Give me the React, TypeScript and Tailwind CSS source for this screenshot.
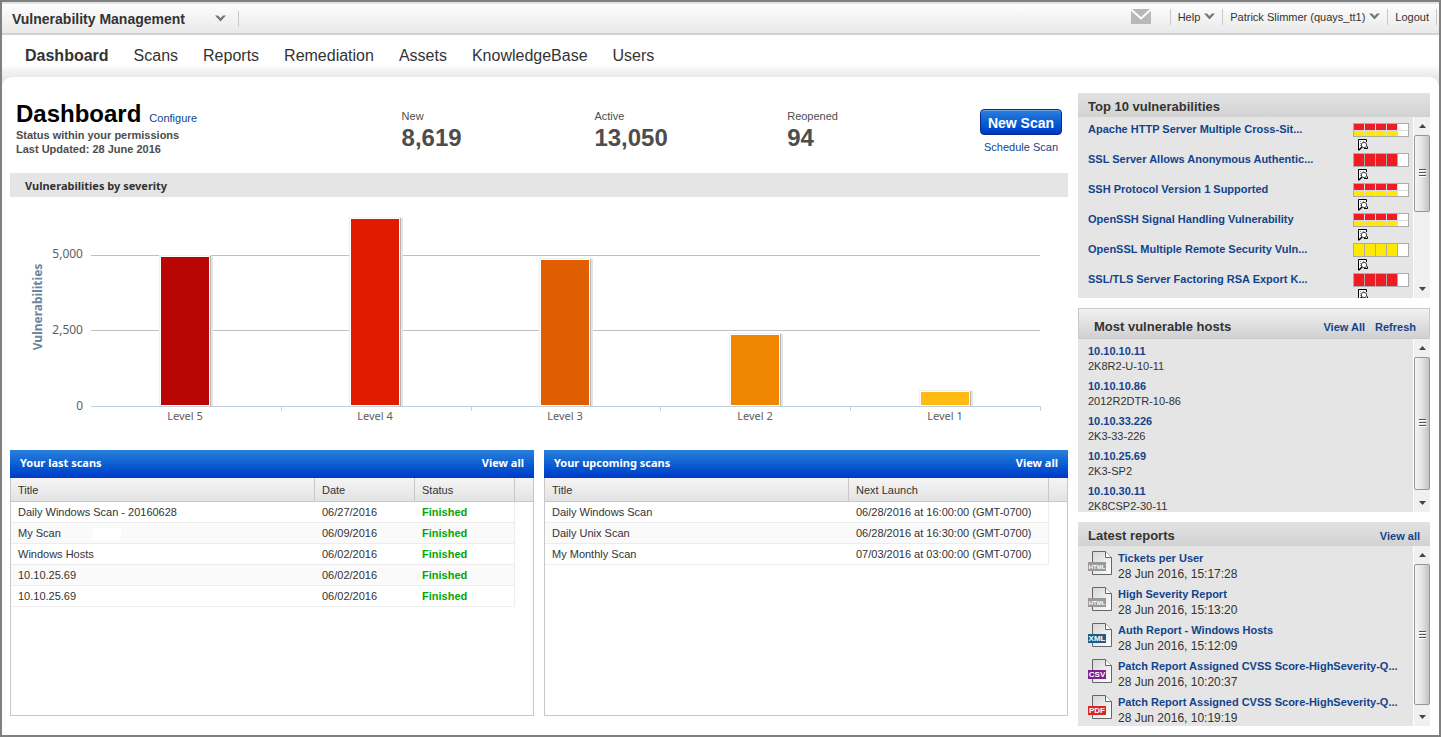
import { type ReactNode } from "react";

interface Severity {
  name: string;
  top: string;
  bottom?: string;
}

const RED = "#ee1c25";
const YELLOW = "#ffe900";

const navItems = ["Dashboard", "Scans", "Reports", "Remediation", "Assets", "KnowledgeBase", "Users"];

const stats = [
  { label: "New", value: "8,619" },
  { label: "Active", value: "13,050" },
  { label: "Reopened", value: "94" },
];

const levels = [
  { label: "Level 5", color: "#b90504", height: 148 },
  { label: "Level 4", color: "#e01b00", height: 186 },
  { label: "Level 3", color: "#e05d00", height: 145 },
  { label: "Level 2", color: "#f08500", height: 70 },
  { label: "Level 1", color: "#ffbb11", height: 13 },
];

const lastScans = [
  { title: "Daily Windows Scan - 20160628", date: "06/27/2016", status: "Finished" },
  { title: "My Scan", date: "06/09/2016", status: "Finished" },
  { title: "Windows Hosts", date: "06/02/2016", status: "Finished" },
  { title: "10.10.25.69", date: "06/02/2016", status: "Finished" },
  { title: "10.10.25.69", date: "06/02/2016", status: "Finished" },
];

const upcomingScans = [
  { title: "Daily Windows Scan", launch: "06/28/2016 at 16:00:00 (GMT-0700)" },
  { title: "Daily Unix Scan", launch: "06/28/2016 at 16:30:00 (GMT-0700)" },
  { title: "My Monthly Scan", launch: "07/03/2016 at 03:00:00 (GMT-0700)" },
];

const topVulns: Severity[] = [
  { name: "Apache HTTP Server Multiple Cross-Sit...", top: RED, bottom: YELLOW },
  { name: "SSL Server Allows Anonymous Authentic...", top: RED },
  { name: "SSH Protocol Version 1 Supported", top: RED, bottom: YELLOW },
  { name: "OpenSSH Signal Handling Vulnerability", top: RED, bottom: YELLOW },
  { name: "OpenSSL Multiple Remote Security Vuln...", top: YELLOW },
  { name: "SSL/TLS Server Factoring RSA Export K...", top: RED },
];

const hosts = [
  { ip: "10.10.10.11", name: "2K8R2-U-10-11" },
  { ip: "10.10.10.86", name: "2012R2DTR-10-86" },
  { ip: "10.10.33.226", name: "2K3-33-226" },
  { ip: "10.10.25.69", name: "2K3-SP2" },
  { ip: "10.10.30.11", name: "2K8CSP2-30-11" },
];

const reports = [
  { title: "Tickets per User", date: "28 Jun 2016, 15:17:28", type: "HTML", color: "#999999" },
  { title: "High Severity Report", date: "28 Jun 2016, 15:13:20", type: "HTML", color: "#999999" },
  { title: "Auth Report - Windows Hosts", date: "28 Jun 2016, 15:12:09", type: "XML", color: "#1f5f83" },
  { title: "Patch Report Assigned CVSS Score-HighSeverity-Q...", date: "28 Jun 2016, 10:20:37", type: "CSV", color: "#7d1f8c" },
  { title: "Patch Report Assigned CVSS Score-HighSeverity-Q...", date: "28 Jun 2016, 10:19:19", type: "PDF", color: "#dc2626" },
];

const Chevron = () => (
  <svg width="11" height="7" viewBox="0 0 11 7" aria-hidden="true">
    <path d="M0 0.5h3L5.5 3 8 0.5h3L5.5 6.5z" fill="#777" />
  </svg>
);

const Divider = () => <span className="h-4 w-px bg-[#c9c9c9]" />;

const DetailIcon = () => (
  <svg width="10" height="12" viewBox="0 0 10 12" fill="none" aria-hidden="true">
    <path d="M0.5 11.5V0.5H8.5V3" fill="#f6f6f6" stroke="#000" />
    <path d="M1 1h7v7L4 9l-3 2z" fill="#f6f6f6" />
    <path d="M2 2.5h1M5 2.5h1M2 4.5h1M2 6.5h1" stroke="#999" />
    <circle cx="6" cy="6" r="2.7" fill="#fff" stroke="#444" />
    <path d="M4 8L1 11" stroke="#000" strokeWidth="1.5" />
    <path d="M6 9.5h3.5V7.5" stroke="#000" />
  </svg>
);

const FileIcon = ({ type, color }: { type: string; color: string }) => (
  <svg className="shrink-0" width="24" height="24" viewBox="0 0 24 24" aria-hidden="true">
    <defs>
      <linearGradient id="page" x1="0" y1="0" x2="1" y2="1">
        <stop offset="0" stopColor="#d6d6d6" />
        <stop offset="1" stopColor="#fff" />
      </linearGradient>
    </defs>
    <path d="M4.5 0.5h13l6 6v17h-19z" fill="url(#page)" stroke="#666" />
    <path d="M17.5 0.5v6h6" fill="#fff" stroke="#666" />
    <rect x="0" y="11" width="18" height="9" fill={color} />
    <text
      x="9"
      y="18"
      textAnchor="middle"
      fill="#fff"
      fontSize={type === "HTML" ? 6 : 8}
      fontWeight="bold"
      fontFamily="Liberation Sans, Arial, sans-serif"
    >
      {type}
    </text>
  </svg>
);

const SeverityMeter = ({ top, bottom }: { top: string; bottom?: string }) => (
  <svg width="56" height="14" viewBox="0 0 56 14" shapeRendering="crispEdges" aria-hidden="true">
    <rect width="56" height="14" fill="#acacac" />
    {[0, 1, 2, 3, 4].map((i) => (
      <g key={i}>
        <rect x={1 + i * 11} y="1" width="10" height="12" fill={i === 4 ? "#fff" : top} />
        {bottom && (
          <>
            <rect x={i * 11 + (i ? 0 : 1)} y="7" width="11" height="1" fill="#dcdcdc" />
            <rect x={1 + i * 11} y="8" width="10" height="5" fill={i === 4 ? "#fff" : bottom} />
          </>
        )}
      </g>
    ))}
    {bottom && <path d="M11.5 1v12M22.5 1v12M33.5 1v12M44.5 1v12" stroke="#dcdcdc" />}
  </svg>
);

// thumb is the share of the track taken by the handle, out of 100
const ScrollBar = ({ thumb }: { thumb: number }) => (
  <div className="flex w-[17px] shrink-0 flex-col border-l border-white bg-[#f0f0f0]">
    <button aria-label="Scroll up" className="flex h-[18px] shrink-0 items-center justify-center">
      <svg width="7" height="4" viewBox="0 0 7 4">
        <path d="M0 4L3.5 0 7 4z" fill="#444" />
      </svg>
    </button>
    <div className="min-h-0 flex-1">
      <div
        className="flex flex-col items-center justify-center gap-px rounded-[2px] border border-[#979797] bg-linear-to-r from-[#f5f5f5] via-[#e4e4e4] to-[#c2c2c6]"
        style={{ height: `${thumb}%` }}
      >
        {[0, 1, 2].map((i) => (
          <span key={i} className="h-[2px] w-[7px] border-t border-[#555] bg-white" />
        ))}
      </div>
    </div>
    <button aria-label="Scroll down" className="flex h-[18px] shrink-0 items-center justify-center">
      <svg width="7" height="4" viewBox="0 0 7 4">
        <path d="M0 0L3.5 4 7 0z" fill="#444" />
      </svg>
    </button>
  </div>
);

const SideBody = ({ height, thumb, children }: { height: string; thumb: number; children: ReactNode }) => (
  <div className={`flex overflow-hidden bg-[#e5e5e5] ${height}`}>
    <div className="min-w-0 flex-1 overflow-hidden pl-[10px]">{children}</div>
    <ScrollBar thumb={thumb} />
  </div>
);

const SeverityChart = () => (
  <svg
    className="block w-full"
    viewBox="0 0 1058 253"
    role="img"
    aria-label="Vulnerabilities by severity"
    fontFamily="Noto Sans, Tahoma, sans-serif"
    fontSize="11"
    fill="#606060"
  >
    <path d="M81 58.5H1030M81 133.5H1030" stroke="#c0c0c0" />
    <g fontSize="12" textAnchor="end">
      <text x="73" y="61">5,000</text>
      <text x="73" y="137">2,500</text>
      <text x="73" y="213">0</text>
    </g>
    <text
      transform="translate(32 110) rotate(-90)"
      textAnchor="middle"
      fontSize="12"
      fontWeight="bold"
      fill="#6d869f"
    >
      Vulnerabilities
    </text>
    {levels.map((level, i) => {
      const x = 151 + i * 190;
      const y = 208 - level.height;
      return (
        <g key={level.label}>
          <rect x={x - 2} y={y - 2} width="52" height={level.height + 3} fill="#f0f0f0" />
          <rect x={x + 49} y={y - 1} width="1" height={level.height + 2} fill="#b4b4b4" />
          <rect x={x + 50} y={y - 1} width="2" height={level.height + 2} fill="#e4e4e4" />
          <rect x={x - 1} y={y - 1} width="50" height={level.height + 2} fill="#fff" />
          <rect x={x} y={y} width="48" height={level.height} fill={level.color} />
          <text x={x + 24} y="223" textAnchor="middle">{level.label}</text>
        </g>
      );
    })}
    <path
      d="M81 209.5H1030.5M271.5 209v5M461.5 209v5M650.5 209v5M840.5 209v5M1030.5 209v5"
      stroke="#c0d0e0"
      fill="none"
    />
  </svg>
);

const ScanPanel = ({ title, children }: { title: string; children: ReactNode }) => (
  <section className="flex min-w-0 flex-1 flex-col">
    <div className="flex h-7 items-center justify-between bg-linear-to-b from-[#2a80dc] to-[#0037c8] px-[10px] pb-[2px] font-['Noto_Sans',Tahoma,sans-serif] text-[11px] font-bold text-white">
      <h2>{title}</h2>
      <a href="#">View all</a>
    </div>
    <div className="flex-1 border border-t-0 border-[#c8c8c8]">{children}</div>
  </section>
);

const headCell = "border-r border-b border-[#c8c8c8] pl-[7px] text-left font-normal";
const bodyCell = "h-[21px] border-b border-[#ededed] pl-[7px]";

const App = () => {
  return (
    <div className="flex min-h-screen flex-col border-2 border-[#808080] bg-[#e9e9e9] font-['Liberation_Sans',Arial,sans-serif] text-[11px] leading-[14px] text-[#333]">
      {/* Top bar */}
      <header className="flex h-[33px] items-center justify-between border-b-2 border-[#cfd2d7] bg-linear-to-b from-white to-[#e9e9e9] pr-[2px] pl-[10px] shadow-[inset_0_2px_0_#e4e4e4]">
        <div className="flex items-center gap-3 pt-[2px]">
          <button className="flex w-[214px] items-center justify-between text-sm font-bold">
            Vulnerability Management
            <Chevron />
          </button>
          <Divider />
        </div>
        <div className="flex items-center gap-[7px] pb-[2px]">
          <button aria-label="Messages" className="mr-3">
            <svg width="20" height="15" viewBox="0 0 20 15">
              <path d="M0 0h20v15H0z" fill="#b8b8b8" />
              <path d="M0 0.5L10 9.5 20 0.5" fill="none" stroke="#fff" strokeWidth="2" />
            </svg>
          </button>
          <Divider />
          <button className="flex items-center gap-1">
            Help
            <Chevron />
          </button>
          <Divider />
          <button className="flex items-center gap-1">
            Patrick Slimmer (quays_tt1)
            <Chevron />
          </button>
          <Divider />
          <a href="#">Logout</a>
          <Divider />
        </div>
      </header>

      <nav className="flex h-[42px] items-center gap-[25px] bg-linear-to-b from-white from-70% to-[#e9e9e9] pl-[23px] text-base">
        {navItems.map((item) => (
          <a key={item} href="#" className={item === "Dashboard" ? "font-bold" : ""}>
            {item}
          </a>
        ))}
      </nav>

      <div className="flex flex-1 gap-[10px] rounded-t-[10px] bg-white pr-[9px] pb-[9px] pl-2">
        {/* Main column */}
        <main className="flex min-w-0 flex-1 flex-col pt-[25px] pb-[10px]">
          <div className="grid h-[71px] grid-cols-[2fr_1fr_1fr_1fr_auto] px-[6px] text-[#4d4d4d]">
            <div>
              <div className="flex h-[26px] items-baseline gap-2">
                <h1 className="text-2xl leading-6 font-bold text-black">Dashboard</h1>
                <a href="#" className="text-[#12448b]">Configure</a>
              </div>
              <p className="font-bold">Status within your permissions</p>
              <p className="font-bold">Last Updated: 28 June 2016</p>
            </div>
            {stats.map((stat) => (
              <div key={stat.label} className="pt-[7px]">
                <p>{stat.label}</p>
                <p className="text-2xl leading-[30px] font-bold">{stat.value}</p>
              </div>
            ))}
            <div className="flex flex-col items-center gap-[5px] pt-[7px]">
              <button className="h-[26px] w-[82px] rounded-[4px] border border-[#0a2a90] bg-linear-to-b from-[#2a80dc] to-[#0037c8] pt-[2px] text-sm font-bold text-white shadow-[inset_0_1px_0_#6aa5ea]">
                New Scan
              </button>
              <a href="#" className="text-[#12448b]">Schedule Scan</a>
            </div>
          </div>

          <h2 className="flex h-6 items-center bg-[#e5e5e5] pt-[2px] pl-[15px] font-['Noto_Sans',Tahoma,sans-serif] font-bold">
            Vulnerabilities by severity
          </h2>
          <SeverityChart />

          <div className="flex flex-1 gap-[10px]">
            <ScanPanel title="Your last scans">
              <table className="w-full table-fixed border-separate border-spacing-0">
                <colgroup>
                  <col />
                  <col className="w-[100px]" />
                  <col className="w-[100px]" />
                  <col className="w-[18px]" />
                </colgroup>
                <thead className="bg-linear-to-b from-[#f5f5f5] to-[#e2e2e2]">
                  <tr className="h-6">
                    <th className={headCell}>Title</th>
                    <th className={headCell}>Date</th>
                    <th className={headCell}>Status</th>
                    <td className="border-b border-[#c8c8c8]" />
                  </tr>
                </thead>
                <tbody>
                  {lastScans.map((scan, i) => (
                    <tr key={i} className="even:[&>td:not(:last-child)]:bg-[#fafafa]">
                      <td className={bodyCell}>
                        {scan.title}
                        {scan.title === "My Scan" && (
                          <span className="ml-8 inline-block h-3 w-7 bg-white align-middle" />
                        )}
                      </td>
                      <td className={bodyCell}>{scan.date}</td>
                      <td className={`${bodyCell} border-r font-bold text-[#00a800]`}>{scan.status}</td>
                      <td />
                    </tr>
                  ))}
                </tbody>
              </table>
            </ScanPanel>

            <ScanPanel title="Your upcoming scans">
              <table className="w-full table-fixed border-separate border-spacing-0">
                <colgroup>
                  <col />
                  <col className="w-[200px]" />
                  <col className="w-[18px]" />
                </colgroup>
                <thead className="bg-linear-to-b from-[#f5f5f5] to-[#e2e2e2]">
                  <tr className="h-6">
                    <th className={headCell}>Title</th>
                    <th className={headCell}>Next Launch</th>
                    <td className="border-b border-[#c8c8c8]" />
                  </tr>
                </thead>
                <tbody>
                  {upcomingScans.map((scan) => (
                    <tr key={scan.title} className="even:[&>td:not(:last-child)]:bg-[#fafafa]">
                      <td className={bodyCell}>{scan.title}</td>
                      <td className={`${bodyCell} border-r`}>{scan.launch}</td>
                      <td />
                    </tr>
                  ))}
                </tbody>
              </table>
            </ScanPanel>
          </div>
        </main>

        {/* Right column */}
        <aside className="flex w-[352px] shrink-0 flex-col gap-[10px] pt-4">
          <section>
            <h2 className="flex h-6 items-center bg-linear-to-b from-[#e3e3e3] to-[#d2d2d2] pt-[3px] pl-[10px] text-[13px] font-bold">
              Top 10 vulnerabilities
            </h2>
            <SideBody height="h-[181px]" thumb={53}>
              <ul className="pt-[6px] pr-1">
                {topVulns.map((vuln) => (
                  <li key={vuln.name} className="flex h-[30px] justify-between">
                    <a href="#" className="leading-[13px] font-bold text-[#12448b]">{vuln.name}</a>
                    <div className="flex flex-col gap-[2px]">
                      <SeverityMeter top={vuln.top} bottom={vuln.bottom} />
                      <button aria-label="Show details" className="ml-[5px] h-3 w-[10px]">
                        <DetailIcon />
                      </button>
                    </div>
                  </li>
                ))}
              </ul>
            </SideBody>
          </section>

          <section>
            <div className="flex h-[31px] items-center justify-between border border-[#c9c9c9] bg-linear-to-b from-[#f2f2f2] to-[#d0d0d0] pt-[7px] pr-[13px] pl-[15px] font-bold">
              <h2 className="text-[13px]">Most vulnerable hosts</h2>
              <div className="flex gap-[10px] text-[#12448b]">
                <a href="#">View All</a>
                <a href="#">Refresh</a>
              </div>
            </div>
            <SideBody height="h-[173px]" thumb={97}>
              <ul className="flex flex-col gap-[5px] pt-[5px] leading-[15px]">
                {hosts.map((host) => (
                  <li key={host.ip}>
                    <a href="#" className="block font-bold text-[#12448b]">{host.ip}</a>
                    <p>{host.name}</p>
                  </li>
                ))}
              </ul>
            </SideBody>
          </section>

          <section>
            <div className="flex h-6 items-center justify-between bg-linear-to-b from-[#e3e3e3] to-[#d2d2d2] pt-[3px] pr-[10px] pl-[10px] font-bold">
              <h2 className="text-[13px]">Latest reports</h2>
              <a href="#" className="text-[#12448b]">View all</a>
            </div>
            <SideBody height="h-[180px]" thumb={98}>
              <ul className="flex flex-col gap-[5px] pt-[5px]">
                {reports.map((report) => (
                  <li key={report.date} className="flex gap-[6px]">
                    <FileIcon type={report.type} color={report.color} />
                    <div className="min-w-0 whitespace-nowrap">
                      <a href="#" className="block leading-[15px] font-bold text-[#12448b]">{report.title}</a>
                      <p className="text-xs leading-4">{report.date}</p>
                    </div>
                  </li>
                ))}
              </ul>
            </SideBody>
          </section>
        </aside>
      </div>
    </div>
  );
};

export default App;
